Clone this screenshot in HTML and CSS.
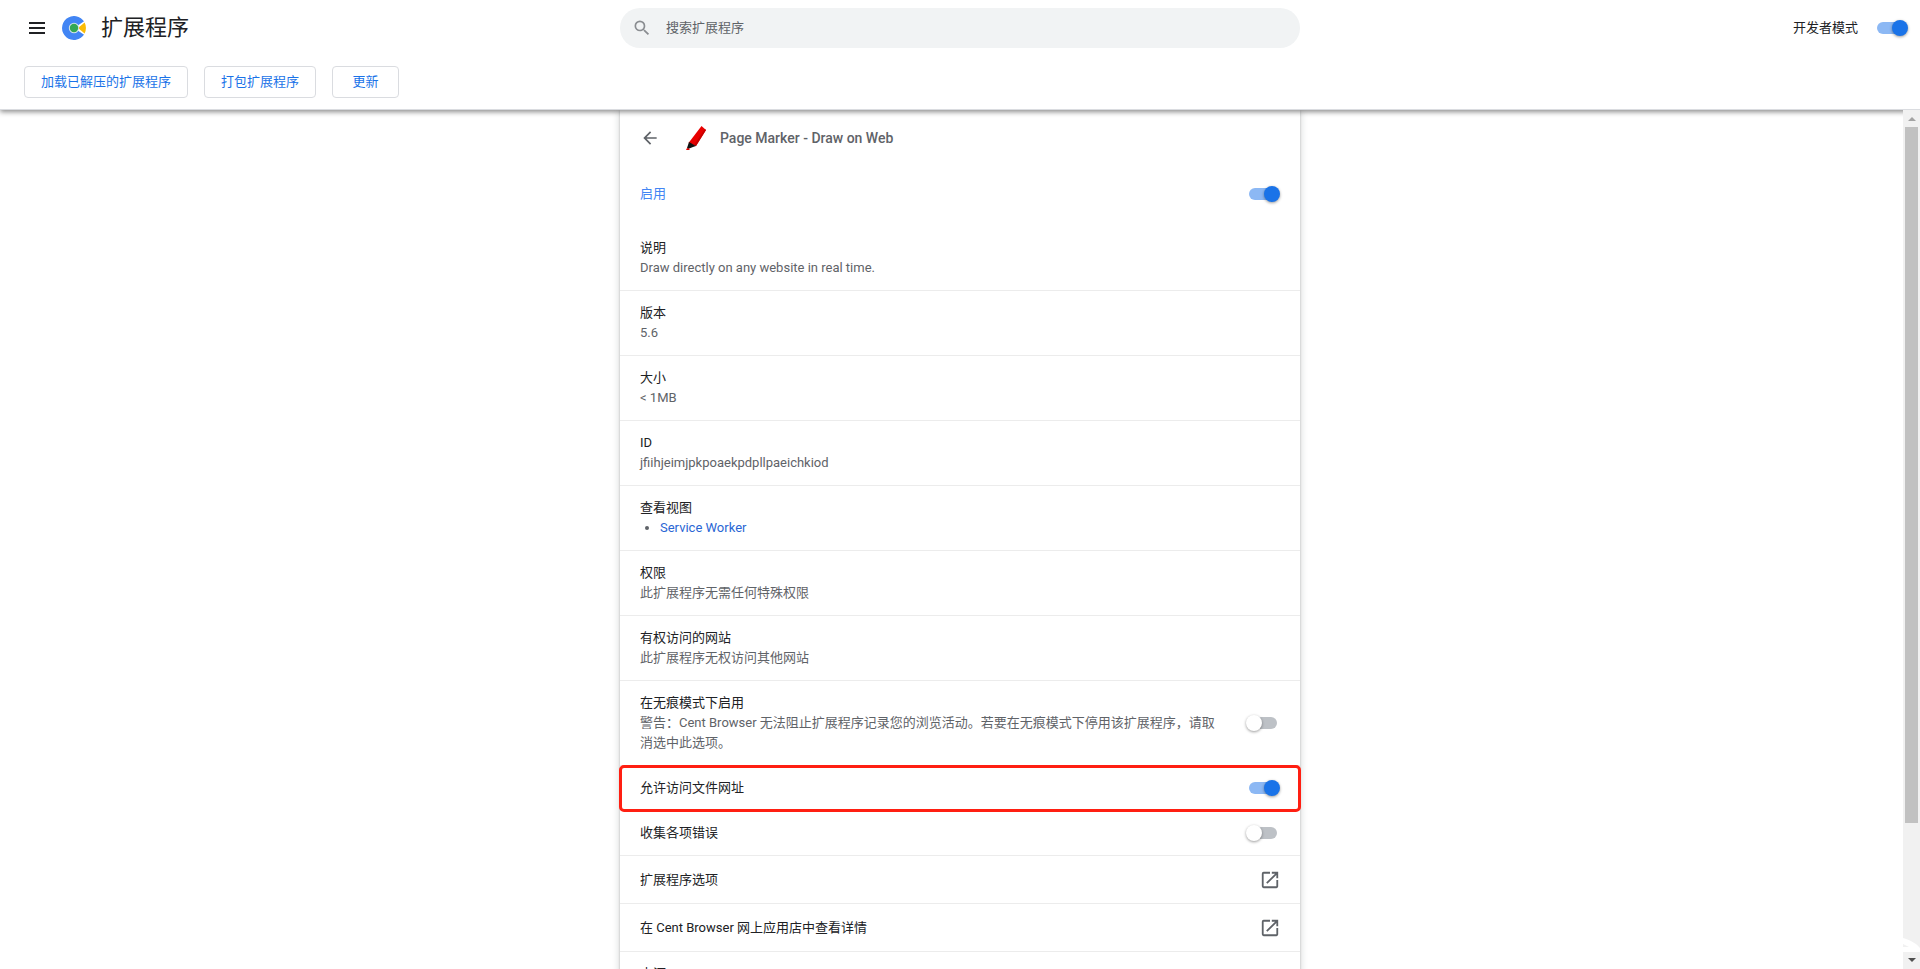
FILE: index.html
```html
<!DOCTYPE html>
<html lang="zh-CN">
<head>
  <meta charset="UTF-8" />
  <meta name="viewport" content="width=device-width,initial-scale=1.0"/>
  <title>扩展程序</title>
  <link rel="stylesheet" href="styles.css">
</head>
<body>
  <header class="toolbar">
    <div class="toolbar-main">
      <div class="brand">
        <button class="icon-button" aria-label="主菜单">
          <svg width="24" height="24" viewBox="0 0 24 24"><path fill="#202124" d="M4 18h16v-2H4v2zm0-5h16v-2H4v2zm0-7v2h16V6H4z"/></svg>
        </button>
        <svg class="logo" width="24" height="24" viewBox="0 0 24 24">
          <path fill="#4285f4" d="M12 12L22.400 6A12 12 0 1 0 22.400 18z"/>
          <path fill="#fff" d="M12 12L24 4v16z"/>
          <path fill="#fbbc05" d="M16 12l6.600-5.400a12 12 0 0 1 0 10.800z"/>
          <circle cx="12" cy="12" r="5.200" fill="#d5e4e8"/>
          <circle cx="12" cy="12" r="4.200" fill="#34a853"/>
        </svg>
        <h1>扩展程序</h1>
      </div>
      <div class="search">
        <svg width="20" height="20" viewBox="0 0 24 24"><path fill="#8a8d91" d="M15.500 14h-.79l-.28-.27A6.470 6.470 0 0 0 16 9.500 6.500 6.500 0 1 0 9.500 16c1.610 0 3.090-.59 4.230-1.570l.27.28v.79l5 4.990L20.490 19l-4.990-5zm-6 0C7.010 14 5 11.990 5 9.500S7.010 5 9.500 5 14 7.010 14 9.500 11.990 14 9.500 14z"/></svg>
        <input type="search" placeholder="搜索扩展程序" aria-label="搜索扩展程序">
      </div>
      <div class="dev-mode">
        <label for="dev-mode">开发者模式</label>
        <input id="dev-mode" class="toggle" type="checkbox" checked>
      </div>
    </div>
    <div class="toolbar-actions">
      <button>加载已解压的扩展程序</button>
      <button>打包扩展程序</button>
      <button>更新</button>
    </div>
  </header>

  <div class="viewport">
    <main class="card">
      <div class="card-header">
        <button class="icon-button" aria-label="返回">
          <svg width="20" height="20" viewBox="0 0 24 24"><path fill="#5f6368" d="M20 11H7.830l5.590-5.590L12 4l-8 8 8 8 1.410-1.410L7.830 13H20v-2z"/></svg>
        </button>
        <svg class="marker" width="24" height="24" viewBox="0 0 24 24">
          <path fill="#e80000" d="M17.500 0L22 4 12 20l-7.500-3z"/>
          <path fill="#c80000" d="M22 4L12 20l-2-1L20.800 3z"/>
          <path fill="#111" d="M5 16l7 4-3 1-5 2-1-1z"/>
          <path fill="#e60000" d="M3 22l3 1-1 1H2z"/>
        </svg>
        <h2>Page Marker - Draw on Web</h2>
      </div>
      <div class="enable-row">
        <label for="enable">启用</label>
        <input id="enable" class="toggle" type="checkbox" checked>
      </div>

      <section class="row">
        <h3>说明</h3>
        <p>Draw directly on any website in real time.</p>
      </section>
      <section class="row">
        <h3>版本</h3>
        <p>5.6</p>
      </section>
      <section class="row">
        <h3>大小</h3>
        <p>&lt; 1MB</p>
      </section>
      <section class="row">
        <h3>ID</h3>
        <p>jfiihjeimjpkpoaekpdpllpaeichkiod</p>
      </section>
      <section class="row">
        <h3>查看视图</h3>
        <ul>
          <li><a href="#">Service Worker</a></li>
        </ul>
      </section>
      <section class="row">
        <h3>权限</h3>
        <p>此扩展程序无需任何特殊权限</p>
      </section>
      <section class="row">
        <h3>有权访问的网站</h3>
        <p>此扩展程序无权访问其他网站</p>
      </section>
      <div class="row control-row">
        <div class="text">
          <label for="incognito">在无痕模式下启用</label>
          <p>警告：Cent Browser 无法阻止扩展程序记录您的浏览活动。若要在无痕模式下停用该扩展程序，请取消选中此选项。</p>
        </div>
        <input id="incognito" class="toggle" type="checkbox">
      </div>
      <div class="row control-row highlighted">
        <label class="text" for="file-access">允许访问文件网址</label>
        <input id="file-access" class="toggle" type="checkbox" checked>
      </div>
      <div class="row control-row">
        <label class="text" for="collect-errors">收集各项错误</label>
        <input id="collect-errors" class="toggle" type="checkbox">
      </div>
      <a class="row link-row" href="#">
        <span>扩展程序选项</span>
        <svg width="20" height="20" viewBox="1 1 22 22"><path fill="#5f6368" d="M19 19H5V5h7V3H5a2 2 0 0 0-2 2v14a2 2 0 0 0 2 2h14c1.100 0 2-.9 2-2v-7h-2v7zM14 3v2h3.590l-9.830 9.830 1.410 1.410L19 6.410V10h2V3h-7z"/></svg>
      </a>
      <a class="row link-row" href="#">
        <span>在 Cent Browser 网上应用店中查看详情</span>
        <svg width="20" height="20" viewBox="1 1 22 22"><path fill="#5f6368" d="M19 19H5V5h7V3H5a2 2 0 0 0-2 2v14a2 2 0 0 0 2 2h14c1.100 0 2-.9 2-2v-7h-2v7zM14 3v2h3.590l-9.830 9.830 1.410 1.410L19 6.410V10h2V3h-7z"/></svg>
      </a>
      <section class="row">
        <h3>来源</h3>
      </section>
    </main>

    <div class="scrollbar" aria-hidden="true">
      <svg width="17" height="17" viewBox="0 0 17 17"><path fill="#a3a3a3" d="M5 11l4-4 4 4z"/></svg>
      <div class="track"><div class="thumb"></div></div>
      <svg width="17" height="17" viewBox="0 0 17 17"><path fill="#505050" d="M5 6h8L9 10z"/></svg>
      <svg class="swoosh" width="17" height="16" viewBox="0 0 17 16"><path fill="#fff" d="M0 0c7 2 13 5 17 10v4H0V9h6L0 6z"/></svg>
    </div>
  </div>
</body>
</html>
```

FILE: styles.css
```css
* {
  box-sizing: border-box;
}
body {
  margin: 0;
  height: 100vh;
  display: flex;
  flex-direction: column;
  overflow: hidden;
  background: #fff;
  color: #202124;
  font-family: Roboto, "Noto Sans CJK SC", sans-serif;
  font-size: 13px;
  line-height: 20px;
}
h1, h2, h3, p, ul {
  margin: 0;
  font-size: 13px;
  font-weight: 400;
}
svg {
  display: block;
  flex: none;
}
button {
  font: inherit;
  background: none;
  cursor: pointer;
}
a {
  color: #2a66d4;
  text-decoration: none;
}
.icon-button {
  padding: 0;
  border: 0;
}

/* toolbar */
.toolbar {
  position: relative;
  z-index: 1;
  flex: none;
  background: #fff;
  border-bottom: 1px solid #dadce0;
  box-shadow: 0 2px 5px rgba(0,0,0,0.45);
}
.toolbar-main {
  display: grid;
  grid-template-columns: 1fr 680px 1fr;
  align-items: center;
  height: 56px;
}
.brand {
  display: flex;
  align-items: center;
  padding-left: 25px;
}
.brand .logo {
  margin: 0 15px 0 13px;
}
.brand h1 {
  font-size: 22px;
  line-height: 32px;
}
.search {
  display: flex;
  align-items: center;
  gap: 14px;
  height: 40px;
  padding: 0 12px;
  border-radius: 20px;
  background: #f1f3f4;
}
.search input {
  flex: 1;
  padding: 0;
  border: 0;
  outline: 0;
  background: none;
  font: inherit;
}
.search input::placeholder {
  color: #5f6368;
}
.dev-mode {
  display: flex;
  justify-content: flex-end;
  align-items: center;
  gap: 16px;
  padding-right: 12px;
}
.toolbar-actions {
  display: flex;
  gap: 16px;
  padding: 10px 24px 11px;
}
.toolbar-actions button {
  height: 32px;
  min-width: 67px;
  padding: 0 16px;
  border: 1px solid #dadce0;
  border-radius: 4px;
  color: #1a73e8;
}

/* toggle switch */
.toggle {
  appearance: none;
  position: relative;
  flex: none;
  width: 34px;
  height: 16px;
  margin: 0;
  cursor: pointer;
}
.toggle::before {
  content: "";
  position: absolute;
  top: 2px;
  left: 3px;
  width: 28px;
  height: 12px;
  border-radius: 6px;
  background: #bdc1c6;
}
.toggle::after {
  content: "";
  position: absolute;
  top: 0;
  left: 0;
  width: 16px;
  height: 16px;
  border-radius: 50%;
  background: #fff;
  box-shadow: 0 1px 3px rgba(0,0,0,0.4);
}
.toggle:checked::before {
  background: #8cb8f4;
}
.toggle:checked::after {
  left: 18px;
  background: #1a73e8;
}

/* details card */
.viewport {
  position: relative;
  flex: 1;
  min-height: 0;
  overflow: hidden;
}
.card {
  max-width: 680px;
  margin: 0 auto;
  background: #fff;
  box-shadow: 0 1px 2px rgba(60,64,67,0.3), 0 2px 6px 2px rgba(60,64,67,0.15);
}
.card-header {
  display: flex;
  align-items: center;
  height: 56px;
  padding: 0 20px;
}
.card-header .marker {
  margin: 0 12px 0 24px;
}
.card-header h2 {
  color: #5f6368;
  font-size: 14px;
  font-weight: 500;
}
.enable-row {
  display: flex;
  align-items: center;
  justify-content: space-between;
  height: 56px;
  margin-bottom: 4px;
  padding: 0 20px;
  color: #4285f4;
}
.row {
  padding: 12px 20px;
  border-bottom: 1px solid #ececec;
}
.row p,
.row ul {
  color: #5f6368;
}
.row ul {
  padding-left: 20px;
}
.control-row {
  display: flex;
  align-items: center;
  gap: 24px;
}
.control-row .text {
  flex: 1;
}
.highlighted {
  outline: 3px solid #ff1f12;
  outline-offset: -2px;
  border-radius: 4px;
}
.link-row {
  display: flex;
  align-items: center;
  justify-content: space-between;
  height: 48px;
  color: #202124;
}

/* scrollbar */
.scrollbar {
  position: absolute;
  top: 0;
  right: 0;
  bottom: 0;
  z-index: 2;
  display: flex;
  flex-direction: column;
  width: 17px;
  background: #f1f1f1;
}
.scrollbar .track {
  flex: 1;
  padding: 0 2px;
}
.scrollbar .thumb {
  height: 84.4%;
  background: #c1c1c1;
}
.scrollbar .swoosh {
  position: absolute;
  bottom: 15px;
  left: 0;
}
```
